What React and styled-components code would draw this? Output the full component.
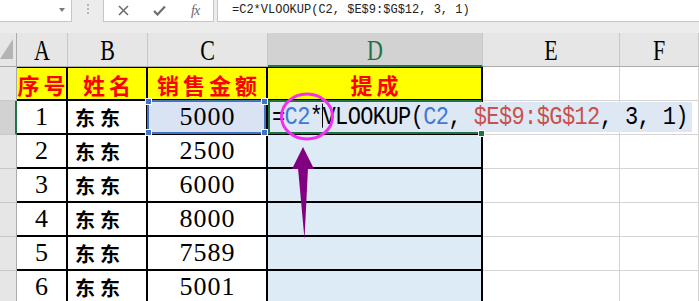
import React from 'react';
import styled, { createGlobalStyle } from 'styled-components';

const GREEN = '#217346';
const BLUE_REF = '#4472c4';

const GlobalStyle = createGlobalStyle`
  html, body { margin: 0; padding: 0; background: #fff; overflow: hidden; }
  #root { width: 699px; height: 301px; }
`;

const Page = styled.div`
  position: relative;
  width: 699px;
  height: 301px;
  overflow: hidden;
  background: #ececec;
  display: flex;
  flex-direction: column;
`;

const Toolbar = styled.div`
  display: flex;
  height: 22px;
  flex: none;
`;

const NameBox = styled.div`
  width: 72px;
  box-sizing: border-box;
  background: #fff;
  border-right: 1px solid #c6c6c6;
  border-bottom: 1px solid #c6c6c6;
  display: flex;
  align-items: center;
  justify-content: flex-end;
  padding-right: 6px;
`;

const Caret = styled.span`
  width: 0;
  height: 0;
  border-left: 3.5px solid transparent;
  border-right: 3.5px solid transparent;
  border-top: 4px solid #7a7a7a;
  margin-top: -2px;
`;

const Grip = styled.div`
  width: 31px;
  display: flex;
  flex-direction: column;
  align-items: center;
  justify-content: center;
  gap: 2px;
  padding-bottom: 4px;
`;

const Dot = styled.span`
  width: 2px;
  height: 2px;
  background: #b5b5b5;
`;

const IconBox = styled.div`
  width: 111px;
  box-sizing: border-box;
  background: #fff;
  border: 1px solid #c6c6c6;
  border-top: none;
  display: flex;
  align-items: center;
  padding-left: 14px;
  gap: 24px;
`;

const Fx = styled.span`
  font: italic 14px "Liberation Serif", serif;
  color: #6a6a6a;
  letter-spacing: -1px;
  margin-left: 1px;
`;

const FormulaInput = styled.div`
  flex: 1;
  margin-left: 3px;
  box-sizing: border-box;
  background: #fff;
  border-left: 1px solid #c6c6c6;
  border-bottom: 1px solid #c6c6c6;
  padding-left: 14px;
  font: 12px/21px "Liberation Mono", monospace;
  color: #222;
  white-space: pre;
`;

const Band = styled.div`
  height: 11px;
  flex: none;
`;

const Sheet = styled.div`
  display: grid;
  grid-template-columns: 17px 51px 80px 120px 215px 137px 1fr;
  grid-auto-rows: 34px;
  background: #fff;
`;

const Corner = styled.div`
  box-sizing: border-box;
  background: #e6e6e6;
  border-right: 1px solid #ababab;
  border-bottom: 1px solid #ababab;
  display: flex;
  align-items: flex-end;
  justify-content: flex-end;
  padding: 0 3px 7px 0;
`;

const ColHeader = styled.div`
  box-sizing: border-box;
  display: flex;
  align-items: center;
  justify-content: center;
  background: ${(p) => (p.$active ? '#d2d2d2' : '#e6e6e6')};
  color: ${(p) => (p.$active ? GREEN : '#000')};
  border-right: 1px solid #c8c8c8;
  border-bottom: ${(p) => (p.$active ? `2px solid ${GREEN}` : '1px solid #ababab')};
  padding-top: 3px;
`;

const ColLetter = styled.span`
  display: inline-block;
  font: 22px "Liberation Serif", serif;
  transform: scaleY(1.3);
`;

const RowHeader = styled.div`
  box-sizing: border-box;
  background: ${(p) => (p.$active ? '#d2d2d2' : '#e6e6e6')};
  border-right: ${(p) => (p.$active ? `2px solid ${GREEN}` : '1px solid #ababab')};
  border-bottom: 1px solid #c8c8c8;
`;

const TitleCell = styled.div`
  box-sizing: border-box;
  display: flex;
  align-items: center;
  justify-content: center;
  background: #ffff00;
  border-top: 1px solid #000;
  border-right: 2px solid #000;
  border-bottom: 2px solid #000;
  white-space: nowrap;
  overflow: visible;
`;

const TitleText = styled.span`
  color: #ff0000;
  font: 700 22px "Noto Sans CJK SC", sans-serif;
  letter-spacing: 4px;
  margin-right: -4px;
`;

const DataCell = styled.div`
  position: relative;
  box-sizing: border-box;
  display: flex;
  align-items: center;
  justify-content: ${(p) => (p.$align === 'left' ? 'flex-start' : 'center')};
  background: ${(p) => (p.$fill === 'blue' ? '#ddebf7' : p.$fill === 'ref' ? '#dae3f3' : '#fff')};
  border-right: 2px solid #000;
  border-bottom: 2px solid #000;
  color: #000;
`;

const GridCell = styled.div`
  box-sizing: border-box;
  background: #fff;
  border-right: 1px solid #d4d4d4;
  border-bottom: 1px solid #d4d4d4;
`;

const NumberText = styled.span`
  font: 26px "Liberation Serif", serif;
  letter-spacing: 1px;
  margin-right: -1px;
`;

const NameText = styled.span`
  font: 700 20px "Noto Sans CJK SC", sans-serif;
  letter-spacing: 5px;
  padding-left: 7px;
`;

const RefFrame = styled.div`
  position: absolute;
  left: -1px;
  top: -1px;
  right: 0;
  bottom: -1px;
  border: 2px solid ${BLUE_REF};
  pointer-events: none;
`;

const Handle = styled.span`
  position: absolute;
  width: 5px;
  height: 5px;
  background: ${(p) => p.$color};
  border: 1px solid #fff;
  z-index: 3;
  ${(p) => (p.$v === 'top' ? 'top: -4px;' : 'bottom: -4px;')}
  ${(p) => (p.$h === 'left' ? 'left: -4px;' : 'right: -4px;')}
`;

const ActiveFrame = styled.div`
  position: absolute;
  left: 0;
  top: -1px;
  right: -1px;
  bottom: -1px;
  border: 2px solid ${GREEN};
  border-right: none;
  pointer-events: none;
  z-index: 1;
`;

const Editor = styled.div`
  position: absolute;
  left: 2px;
  top: 1px;
  bottom: 1px;
  width: 420px;
  z-index: 2;
  background: #dde8f4;
  padding-left: 2px;
  white-space: pre;
  font: 22px/32px "Liberation Mono", monospace;
  letter-spacing: -0.6px;
  color: #000;
`;

const EditorText = styled.span`
  display: inline-block;
  transform: scaleY(1.2);
`;

const Tok = styled.span`
  color: ${(p) => (p.$kind === 'ref' ? '#3c7ad6' : p.$kind === 'range' ? '#c9504c' : '#000')};
`;

const TextCursor = styled.span`
  display: inline-block;
  width: 1px;
  height: 20px;
  background: #000;
  margin-right: -1px;
  vertical-align: -3px;
`;

const Annotation = styled.svg`
  position: absolute;
  left: 0;
  top: 0;
  pointer-events: none;
  z-index: 10;
`;

const rows = [
  [1, '东东', 5000],
  [2, '东东', 2500],
  [3, '东东', 6000],
  [4, '东东', 8000],
  [5, '东东', 7589],
  [6, '东东', 5001],
];

const cols = ['A', 'B', 'C', 'D', 'E', 'F'];
const titles = ['序号', '姓名', '销售金额', '提成'];

function Icons() {
  return (
    <>
      <svg width="11" height="11" viewBox="0 0 11 11">
        <path d="M1 1 L10 10 M10 1 L1 10" stroke="#6e6e6e" strokeWidth="1.6" fill="none" />
      </svg>
      <svg width="13" height="11" viewBox="0 0 13 11">
        <path d="M1 6 L4.5 9.5 L12 1.5" stroke="#6e6e6e" strokeWidth="2.2" fill="none" />
      </svg>
      <Fx>fx</Fx>
    </>
  );
}

export default function App() {
  return (
    <Page>
      <GlobalStyle />
      <Toolbar>
        <NameBox>
          <Caret />
        </NameBox>
        <Grip>
          <Dot />
          <Dot />
          <Dot />
        </Grip>
        <IconBox>
          <Icons />
        </IconBox>
        <FormulaInput>=C2*VLOOKUP(C2, $E$9:$G$12, 3, 1)</FormulaInput>
      </Toolbar>
      <Band />
      <Sheet>
        <Corner>
          <svg width="13" height="20" viewBox="0 0 13 20">
            <polygon points="13,0 13,20 0,20" fill="#b4b4b4" />
          </svg>
        </Corner>
        {cols.map((c) => (
          <ColHeader key={c} $active={c === 'D'}>
            <ColLetter>{c}</ColLetter>
          </ColHeader>
        ))}

        <RowHeader />
        {titles.map((t) => (
          <TitleCell key={t}>
            <TitleText>{t}</TitleText>
          </TitleCell>
        ))}
        <GridCell />
        <GridCell />

        {rows.map(([n, name, amt], i) => (
          <React.Fragment key={n}>
            <RowHeader $active={i === 0} />
            <DataCell>
              <NumberText>{n}</NumberText>
            </DataCell>
            <DataCell $align="left">
              <NameText>{name}</NameText>
            </DataCell>
            <DataCell $fill={i === 0 ? 'ref' : 'white'}>
              <NumberText>{amt}</NumberText>
              {i === 0 && (
                <RefFrame>
                  <Handle $color={BLUE_REF} $v="top" $h="left" />
                  <Handle $color={BLUE_REF} $v="top" $h="right" />
                  <Handle $color={BLUE_REF} $v="bottom" $h="left" />
                  <Handle $color={BLUE_REF} $v="bottom" $h="right" />
                </RefFrame>
              )}
            </DataCell>
            <DataCell $fill="blue">
              {i === 0 && (
                <>
                  <ActiveFrame />
                  <Editor>
                    <EditorText>
                      <Tok>=</Tok>
                      <Tok $kind="ref">C2</Tok>
                      <Tok>*</Tok>
                      <TextCursor />
                      <Tok>VLOOKUP(</Tok>
                      <Tok $kind="ref">C2</Tok>
                      <Tok>, </Tok>
                      <Tok $kind="range">$E$9:$G$12</Tok>
                      <Tok>, 3, 1)</Tok>
                    </EditorText>
                  </Editor>
                  <Handle $color={GREEN} $v="bottom" $h="right" />
                </>
              )}
            </DataCell>
            <GridCell />
            <GridCell />
          </React.Fragment>
        ))}
      </Sheet>
      <Annotation width="699" height="301" viewBox="0 0 699 301">
        <ellipse cx="307" cy="116.5" rx="25.5" ry="22.5" fill="none" stroke="#f22ff2" strokeWidth="3" />
        <polygon points="303,147 314,169 292,169" fill="#800080" />
        <polygon points="298,168 308,168 304.5,239" fill="#800080" />
      </Annotation>
    </Page>
  );
}
